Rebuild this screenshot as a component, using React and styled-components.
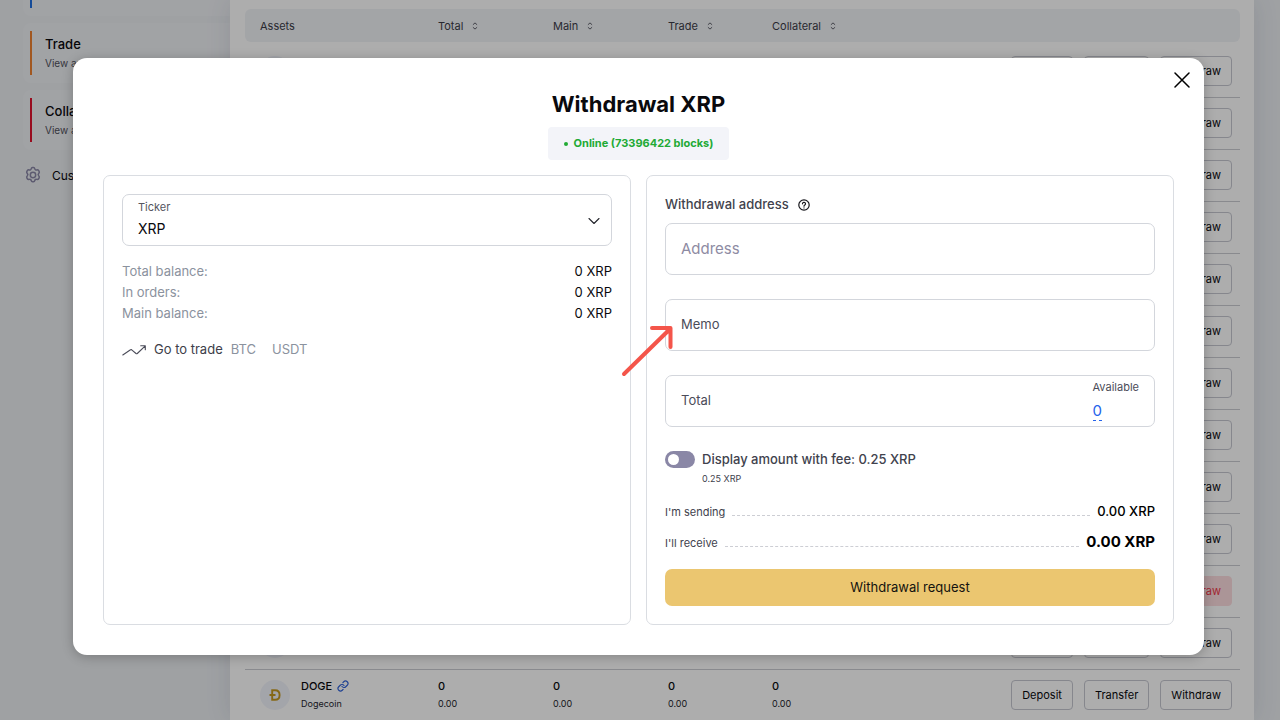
import React from "react";
import styled, { createGlobalStyle } from "styled-components";
import { ChevronDown, Link as LinkIcon } from "lucide-react";

const Global = createGlobalStyle`
  *, *::before, *::after { box-sizing: border-box; }
  body {
    margin: 0;
    font-family: Inter, "Liberation Sans", sans-serif;
    font-size: 13px;
    line-height: 21px;
    color: #09090d;
    background: #eaedf1;
  }
  button, input, select { font: inherit; color: inherit; }
  h1, h2, p { margin: 0; }
`;

const Screen = styled.div`
  position: relative;
  display: flex;
  height: 100vh;
  min-height: 720px;
  overflow: hidden;
`;

/* Sidebar, scrolled up so that its first card is cut by the window edge */
const Sidebar = styled.nav`
  display: flex;
  flex-direction: column;
  gap: 7px;
  width: 230px;
  flex: none;
  margin-top: -44px;
  padding-left: 23px;
`;

const AccountCard = styled.section`
  display: flex;
  gap: 13px;
  height: 60px;
  padding: 8px 7px;
  border-radius: 8px 0 0 8px;
  background: #eef0f4;
`;

const AccountBar = styled.span`
  width: 2px;
  background: ${(p) => p.$color};
`;

const AccountName = styled.h2`
  font-size: 13px;
  line-height: 20px;
  font-weight: 500;
  padding-top: 3px;
`;

const AccountHint = styled.p`
  font-size: 10px;
  line-height: 18px;
  color: #50515c;
`;

const SettingsButton = styled.button`
  display: flex;
  align-items: center;
  gap: 10px;
  height: 36px;
  padding: 0 1px;
  border: 0;
  background: none;
  font-size: 12px;
`;

const Main = styled.main`
  flex: 1;
  margin-right: 26px;
  padding: 9px 14px 0 15px;
  background: #fff;
  box-shadow: 0 0 24px rgba(60, 62, 90, 0.12);
`;

const AssetTable = styled.table`
  width: 100%;
  table-layout: fixed;
  border-spacing: 0;

  tbody::before {
    content: "";
    display: block;
    height: 4px;
  }
`;

const HeadCell = styled.th`
  width: ${(p) => p.$width || "auto"};
  height: 33px;
  padding: 0 0 0 ${(p) => (p.$first ? 15 : 0)}px;
  background: #f1f3f7;
  font-size: 11px;
  font-weight: 400;
  line-height: 16px;
  text-align: left;
  color: #3b3c48;

  &:first-child { border-radius: 6px 0 0 6px; }
  &:last-child { border-radius: 0 6px 6px 0; }
`;

const HeadLabel = styled.span`
  display: flex;
  align-items: center;
  gap: 9px;
`;

const Cell = styled.td`
  height: 52px;
  padding: 0 0 2px ${(p) => (p.$first ? 15 : 0)}px;
  border-bottom: 1px solid #cbccd2;
  font-size: 9px;
  line-height: 18px;
  color: #24252c;
`;

const Asset = styled.div`
  display: flex;
  align-items: center;
  gap: 11px;
`;

const Coin = styled.span`
  display: grid;
  place-items: center;
  width: 30px;
  height: 30px;
  border-radius: 50%;
  background: #f1f3fb;
`;

const Strong = styled.div`
  display: flex;
  align-items: center;
  gap: 5px;
  font-size: 11px;
  font-weight: 500;
  color: #09090d;

  svg { color: #2f62d9; }
`;

const Actions = styled.div`
  display: flex;
  justify-content: flex-end;
  gap: 11px;
  padding-right: 8px;
`;

const RowButton = styled.button`
  height: 30px;
  padding: 0 10px;
  border: 1px solid ${(p) => (p.$blocked ? "#fcdcdf" : "#c6c7d0")};
  border-radius: 4px;
  background: ${(p) => (p.$blocked ? "#fcdcdf" : "transparent")};
  color: ${(p) => (p.$blocked ? "#f0384a" : "#09090d")};
  font-size: 11px;
  line-height: 16px;
`;

const Overlay = styled.div`
  position: absolute;
  inset: 0;
  padding: 58px 76px 0 73px;
  background: rgba(0, 0, 0, 0.32);
`;

const Dialog = styled.section`
  position: relative;
  padding: 30px;
  border-radius: 14px;
  background: #fff;
  box-shadow: 0 2px 12px rgba(0, 0, 0, 0.24);
`;

const CloseButton = styled.button`
  position: absolute;
  top: 12px;
  right: 12px;
  display: grid;
  place-items: center;
  width: 20px;
  height: 20px;
  padding: 0;
  border: 0;
  background: none;
`;

const DialogHeader = styled.header`
  display: flex;
  flex-direction: column;
  align-items: center;
  gap: 7px;
  margin-bottom: 15px;
`;

const Title = styled.h1`
  font-size: 22px;
  line-height: 32px;
  font-weight: 700;
`;

const Status = styled.p`
  display: flex;
  align-items: center;
  gap: 6px;
  height: 33px;
  padding: 0 16px;
  border-radius: 4px;
  background: #f3f4f9;
  color: #22aa35;
  font-size: 11px;
  font-weight: 700;

  &::before {
    content: "";
    width: 4px;
    height: 4px;
    border-radius: 50%;
    background: currentColor;
  }
`;

const Panels = styled.div`
  display: grid;
  grid-template-columns: 1fr 1fr;
  gap: 15px;
`;

const Panel = styled.div`
  padding: 18px;
  border: 1px solid #dadde2;
  border-radius: 7px;
`;

const Field = styled.div`
  position: relative;
  display: flex;
  align-items: center;
  gap: 8px;
  height: 52px;
  margin-bottom: ${(p) => p.$gap}px;
  padding: 0 15px 2px;
  border: 1px solid #d3d6dc;
  border-radius: 7px;
`;

const FieldLabel = styled.label`
  color: #4b4c59;
`;

const SelectBody = styled.div`
  flex: 1;
  display: flex;
  flex-direction: column;
  padding-bottom: 2px;
`;

const SmallLabel = styled.label`
  font-size: 11px;
  line-height: 20px;
  color: #55565f;
`;

const Select = styled.select`
  appearance: none;
  width: 100%;
  height: 22px;
  padding: 0;
  border: 0;
  outline: 0;
  background: none;
  font-size: 14px;
`;

const Chevron = styled(ChevronDown)`
  position: absolute;
  right: 7px;
  top: 16px;
  color: #24252c;
  pointer-events: none;
`;

const TextInput = styled.input`
  flex: 1;
  min-width: 0;
  height: 48px;
  padding: 0;
  border: 0;
  outline: 0;
  background: none;
  font-size: 15px;

  &::placeholder { color: #8e8ba3; opacity: 1; }
`;

const Balances = styled.dl`
  display: grid;
  grid-template-columns: 1fr auto;
  margin: 0 0 15px;
`;

const BalanceName = styled.dt`
  color: #8b929e;
`;

const BalanceValue = styled.dd`
  margin: 0;
  text-align: right;
`;

const TradeLinks = styled.div`
  display: flex;
  align-items: center;
  gap: 16px;
`;

const TradeLead = styled.span`
  display: flex;
  align-items: center;
  gap: 8px;
  color: #3d3e49;
`;

const PairLink = styled.a`
  color: #8b929e;
  text-decoration: none;
`;

const AddressHeading = styled.div`
  display: flex;
  align-items: center;
  gap: 9px;
  margin-bottom: 8px;
`;

const MediumLabel = styled.label`
  font-weight: 500;
  color: #41424d;
`;

const Pointer = styled.svg`
  position: absolute;
  left: -47px;
  top: 22px;
  pointer-events: none;
`;

const Available = styled.div`
  display: flex;
  flex-direction: column;
  align-items: flex-start;
  gap: 6px;
  padding-bottom: 2px;
  font-size: 11px;
  line-height: 18px;
  color: #4b4c59;
`;

const AvailableLink = styled.a`
  border-bottom: 1px dashed #2563eb;
  color: #2563eb;
  font-size: 15px;
  line-height: 18px;
  text-decoration: none;
`;

const FeeRow = styled.div`
  display: grid;
  grid-template-columns: 30px 1fr;
  column-gap: 7px;
  align-items: center;
  margin-bottom: 13px;
`;

const Switch = styled.input`
  appearance: none;
  display: flex;
  align-items: center;
  width: 30px;
  height: 17px;
  margin: 0;
  padding: 0 3px;
  border-radius: 9px;
  background: #8a87a6;

  &::before {
    content: "";
    width: 11px;
    height: 11px;
    border-radius: 50%;
    background: #fff;
  }

  &:checked { justify-content: flex-end; }
`;

const FeeNote = styled.span`
  grid-column: 2;
  font-size: 9px;
  line-height: 18px;
  color: #41424d;
`;

const SummaryRow = styled.div`
  display: flex;
  align-items: baseline;
  gap: 7px;
  height: 20px;
  margin-bottom: ${(p) => p.$gap}px;
  font-size: 11px;
  line-height: 20px;
  color: #41424d;
`;

const Leader = styled.span`
  flex: 1;
  border-bottom: 1px dashed #cdced4;
`;

const SummaryValue = styled.strong`
  font-size: ${(p) => (p.$large ? 15 : 13)}px;
  font-weight: ${(p) => (p.$large ? 700 : 500)};
  color: #000;
`;

const SubmitButton = styled.button`
  display: block;
  width: 100%;
  height: 37px;
  padding: 0;
  border: 0;
  border-radius: 7px;
  background: #ebc670;
  color: #14130f;
`;

const SortIcon = () => (
  <svg width="6" height="8" viewBox="0 0 6 8" fill="none" stroke="#3b3c48" strokeLinecap="round" strokeLinejoin="round">
    <path strokeWidth="0.8" d="M1.200 2.500 3 0.900l1.800 1.600M1.200 5.500l1.800 1.600 1.800-1.600" />
  </svg>
);

const GearIcon = () => (
  <svg width="18" height="18" viewBox="0 0 24 24" fill="none" stroke="#8a87a6" strokeWidth="2" strokeLinejoin="round">
    <path d="M9.600 3.200c.2-1 .8-1.700 1.800-1.700h1.200c1 0 1.600.7 1.800 1.700.3 1.200 1.400 1.800 2.500 1.500 1-.3 2-.2 2.600.8l.7 1.200c.5.900.2 1.800-.5 2.500-.9.900-.9 2.600 0 3.500.7.700 1 1.600.5 2.500l-.7 1.200c-.6 1-1.600 1.100-2.600.8-1.100-.3-2.200.3-2.500 1.500-.2 1-.8 1.700-1.800 1.700h-1.200c-1 0-1.600-.7-1.800-1.700-.3-1.200-1.400-1.800-2.500-1.500-1 .3-2 .2-2.600-.8l-.7-1.200c-.5-.9-.2-1.800.5-2.500.9-.9.9-2.600 0-3.500-.7-.7-1-1.600-.5-2.500l.7-1.200c.6-1 1.600-1.100 2.600-.8 1.100.3 2.200-.3 2.500-1.500Z" transform="translate(0 .6)" />
    <circle cx="12" cy="12" r="3.600" />
  </svg>
);

const DogeIcon = () => (
  <svg width="12" height="12" viewBox="0 0 12 12" fill="none" stroke="#c59a22" strokeWidth="1.9">
    <path d="M3.2 1.2h2.9c3 0 4.5 2 4.5 4.8s-1.500 4.800-4.500 4.800H3.200zM0.500 6h6" />
  </svg>
);

const CloseIcon = () => (
  <svg width="16" height="16" viewBox="0 0 16 16" stroke="#000" strokeWidth="1.5" strokeLinecap="round">
    <path d="m1 1 14 14M15 1 1 15" />
  </svg>
);

const TrendIcon = () => (
  <svg width="24" height="12" viewBox="0 0 24 12" fill="none" stroke="#4b4c59" strokeWidth="1.1" strokeLinecap="round" strokeLinejoin="round">
    <path d="m0.800 11 7.700-5.200a1 1 0 0 1 1.200 0l4.300 3.700a1 1 0 0 0 1.300 0L23 2.200M18.700 1.800h4.600v4" />
  </svg>
);

const HelpIcon = () => (
  <svg width="12" height="12" viewBox="0 0 12 12" fill="none" stroke="#16161c" strokeWidth="1.200" strokeLinecap="round" strokeLinejoin="round">
    <circle cx="6" cy="6" r="5.200" />
    <path d="M4.500 4.800a1.500 1.500 0 1 1 2.300 1.300c-.6.400-.8.600-.8 1.100M6 8.800v.1" />
  </svg>
);

const accounts = [
  { name: "Main", color: "#1f6fe0" },
  { name: "Trade", color: "#ee8130" },
  { name: "Collateral", color: "#e0122f" },
];

const balanceColumns = [
  { name: "Total", width: "115px" },
  { name: "Main", width: "115px" },
  { name: "Trade", width: "104px" },
  { name: "Collateral", width: "115px" },
];

const assets = [
  ...Array.from({ length: 11 }, (_, i) => ({ id: i, blocked: i === 10 })),
  { id: 11, ticker: "DOT", name: "Polkadot" },
  { id: 12, ticker: "DOGE", name: "Dogecoin", icon: <DogeIcon /> },
];

const AssetRow = ({ asset }) => (
  <tr>
    <Cell $first>
      <Asset>
        <Coin>{asset.icon}</Coin>
        {asset.ticker && (
          <div>
            <Strong>
              {asset.ticker}
              <LinkIcon size={12} strokeWidth={2.3} />
            </Strong>
            {asset.name}
          </div>
        )}
      </Asset>
    </Cell>
    {balanceColumns.map((column) => (
      <Cell key={column.name}>
        {asset.ticker && (
          <>
            <Strong>0</Strong>
            0.00
          </>
        )}
      </Cell>
    ))}
    <Cell>
      <Actions>
        <RowButton>Deposit</RowButton>
        <RowButton>Transfer</RowButton>
        <RowButton $blocked={asset.blocked}>Withdraw</RowButton>
      </Actions>
    </Cell>
  </tr>
);

const Balance = ({ name }) => (
  <>
    <BalanceName>{name}</BalanceName>
    <BalanceValue>0 XRP</BalanceValue>
  </>
);

const WithdrawalDialog = () => (
  <Dialog role="dialog" aria-labelledby="dialog-title">
    <CloseButton aria-label="Close">
      <CloseIcon />
    </CloseButton>
    <DialogHeader>
      <Title id="dialog-title">Withdrawal XRP</Title>
      <Status>Online (73396422 blocks)</Status>
    </DialogHeader>
    <Panels>
      <Panel>
        <Field $gap={15}>
          <SelectBody>
            <SmallLabel htmlFor="ticker">Ticker</SmallLabel>
            <Select id="ticker" defaultValue="XRP">
              <option>XRP</option>
            </Select>
          </SelectBody>
          <Chevron size={20} strokeWidth={1.3} />
        </Field>
        <Balances>
          <Balance name="Total balance:" />
          <Balance name="In orders:" />
          <Balance name="Main balance:" />
        </Balances>
        <TradeLinks>
          <TradeLead>
            <TrendIcon />
            Go to trade
            <PairLink href="#btc">BTC</PairLink>
          </TradeLead>
          <PairLink href="#usdt">USDT</PairLink>
        </TradeLinks>
      </Panel>
      <Panel>
        <AddressHeading>
          <MediumLabel htmlFor="address">Withdrawal address</MediumLabel>
          <HelpIcon />
        </AddressHeading>
        <Field $gap={24}>
          <TextInput id="address" placeholder="Address" />
        </Field>
        <Field $gap={24}>
          <FieldLabel htmlFor="memo">Memo</FieldLabel>
          <TextInput id="memo" />
          <Pointer width="54" height="56" viewBox="0 0 54 56" fill="none" stroke="#f4554a" strokeWidth="4" strokeLinecap="round" strokeLinejoin="round">
            <path d="M5 52 51 7M33 6h18.500v19" />
          </Pointer>
        </Field>
        <Field $gap={22}>
          <FieldLabel htmlFor="total">Total</FieldLabel>
          <TextInput id="total" />
          <Available>
            Available
            <AvailableLink href="#max">0</AvailableLink>
          </Available>
        </Field>
        <FeeRow>
          <Switch type="checkbox" role="switch" id="with-fee" />
          <MediumLabel htmlFor="with-fee">Display amount with fee: 0.25 XRP</MediumLabel>
          <FeeNote>0.25 XRP</FeeNote>
        </FeeRow>
        <SummaryRow $gap={11}>
          I'm sending
          <Leader />
          <SummaryValue>0.00 XRP</SummaryValue>
        </SummaryRow>
        <SummaryRow $gap={17}>
          I'll receive
          <Leader />
          <SummaryValue $large>0.00 XRP</SummaryValue>
        </SummaryRow>
        <SubmitButton>Withdrawal request</SubmitButton>
      </Panel>
    </Panels>
  </Dialog>
);

export default function App() {
  return (
    <Screen>
      <Global />
      <Sidebar>
        {accounts.map((account) => (
          <AccountCard key={account.name}>
            <AccountBar $color={account.color} />
            <div>
              <AccountName>{account.name}</AccountName>
              <AccountHint>View assets</AccountHint>
            </div>
          </AccountCard>
        ))}
        <SettingsButton>
          <GearIcon />
          Customize
        </SettingsButton>
      </Sidebar>
      <Main>
        <AssetTable>
          <thead>
            <tr>
              <HeadCell $first $width="193px">Assets</HeadCell>
              {balanceColumns.map((column) => (
                <HeadCell key={column.name} $width={column.width}>
                  <HeadLabel>
                    {column.name}
                    <SortIcon />
                  </HeadLabel>
                </HeadCell>
              ))}
              <HeadCell />
            </tr>
          </thead>
          <tbody>
            {assets.map((asset) => (
              <AssetRow key={asset.id} asset={asset} />
            ))}
          </tbody>
        </AssetTable>
      </Main>
      <Overlay>
        <WithdrawalDialog />
      </Overlay>
    </Screen>
  );
}
